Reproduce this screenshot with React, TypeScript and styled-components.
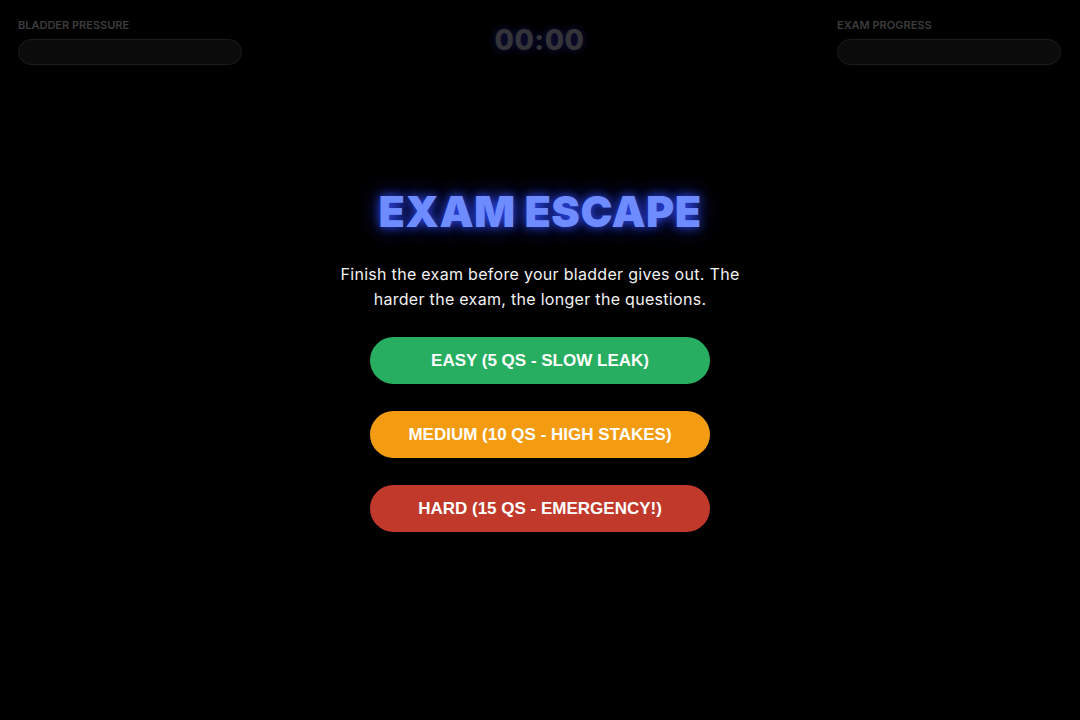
import styled, { createGlobalStyle } from "styled-components";

const GlobalStyle = createGlobalStyle`
  html, body {
    margin: 0;
    padding: 0;
    background: #000;
  }
  body {
    font-family: "Inter", "Noto Sans", sans-serif;
    color: #fff;
  }
`;

const Screen = styled.div`
  width: 1080px;
  height: 720px;
  background: #000;
  display: flex;
  flex-direction: column;
  overflow: hidden;
`;

const Hud = styled.header`
  display: grid;
  grid-template-columns: 224px 1fr 224px;
  align-items: start;
  padding: 18px 19px 0 18px;
`;

const Meter = styled.div`
  display: flex;
  flex-direction: column;
  gap: 7px;
`;

const MeterLabel = styled.span`
  font-family: "Inter", "Noto Sans", sans-serif;
  font-size: 11px;
  font-weight: 600;
  color: #3c3c3c;
  text-transform: uppercase;
  line-height: 14px;
`;

const Track = styled.div`
  height: 24px;
  border-radius: 13px;
  background: #0b0b0b;
  border: 1px solid #1c1c1c;
`;

const Timer = styled.div`
  justify-self: center;
  margin-top: 5px;
  font-family: "Inter", sans-serif;
  font-size: 28px;
  font-weight: 800;
  color: #333338;
  letter-spacing: 0.5px;
  text-shadow: 0 0 8px rgba(40, 40, 160, 0.5);
`;

const Center = styled.main`
  flex: 1;
  display: flex;
  flex-direction: column;
  align-items: center;
  padding-top: 116px;
`;

const Title = styled.h1`
  margin: 0;
  font-family: "Inter", "Noto Sans", sans-serif;
  font-size: 43px;
  font-weight: 900;
  letter-spacing: 0.4px;
  line-height: 60px;
  color: #6e8bff;
  text-shadow: 0 0 10px rgba(50, 80, 255, 0.9), 0 0 22px rgba(40, 60, 255, 0.6);
`;

const Blurb = styled.p`
  margin: 21px 0 25px;
  width: 420px;
  text-align: center;
  font-family: "Inter", "Noto Sans", sans-serif;
  font-size: 16px;
  letter-spacing: 0.3px;
  line-height: 25px;
  color: #f2f2f2;
`;

const Options = styled.div`
  display: flex;
  flex-direction: column;
  gap: 27px;
`;

const Choice = styled.button<{ $bg: string }>`
  width: 340px;
  height: 47px;
  border: none;
  border-radius: 24px;
  background: ${(p) => p.$bg};
  color: #fff;
  font-family: "Liberation Sans", Arial, sans-serif;
  font-size: 17px;
  font-weight: 700;
  text-transform: uppercase;
  cursor: pointer;
  &:hover {
    filter: brightness(1.1);
  }
`;

const levels = [
  { label: "Easy (5 Qs - Slow Leak)", color: "#27ae60" },
  { label: "Medium (10 Qs - High Stakes)", color: "#f39c12" },
  { label: "Hard (15 Qs - Emergency!)", color: "#c0392b" },
];

export default function App() {
  return (
    <>
      <GlobalStyle />
      <Screen>
        <Hud>
          <Meter>
            <MeterLabel>Bladder Pressure</MeterLabel>
            <Track />
          </Meter>
          <Timer>00:00</Timer>
          <Meter>
            <MeterLabel>Exam Progress</MeterLabel>
            <Track />
          </Meter>
        </Hud>
        <Center>
          <Title>EXAM ESCAPE</Title>
          <Blurb>
            Finish the exam before your bladder gives out. The harder the exam, the longer the questions.
          </Blurb>
          <Options>
            {levels.map((l) => (
              <Choice key={l.label} $bg={l.color}>
                {l.label}
              </Choice>
            ))}
          </Options>
        </Center>
      </Screen>
    </>
  );
}
